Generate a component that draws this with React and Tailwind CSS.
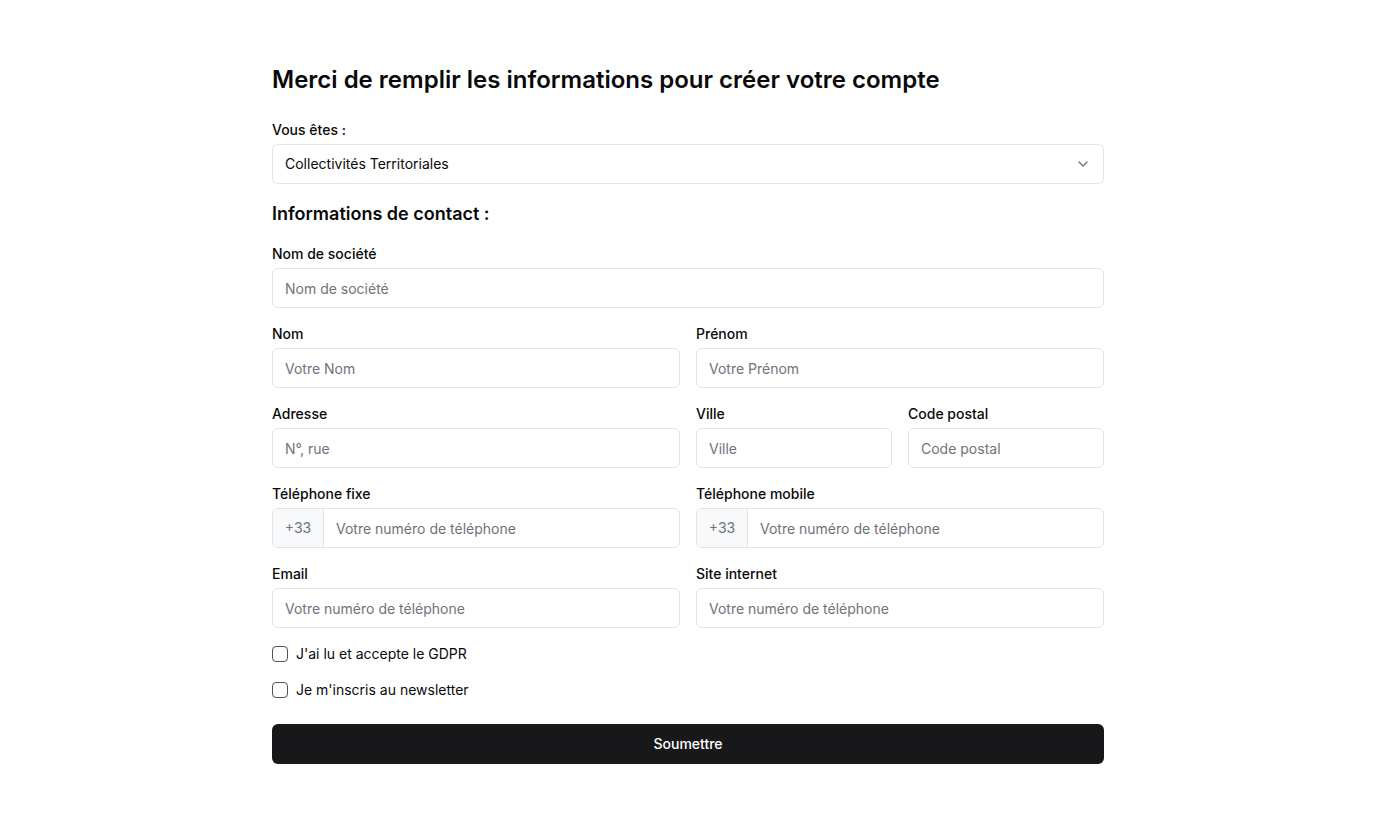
import React from "react";

const font = { fontFamily: "Inter, 'Noto Sans', sans-serif" };

function Label({ children }) {
  return <div className="text-sm font-medium leading-5 text-[#09090b] pt-[1px] pb-[4px]">{children}</div>;
}

function Input({ placeholder }) {
  return (
    <input
      placeholder={placeholder}
      className="h-10 w-full rounded-md border border-[#e4e4e7] bg-white px-3 text-sm text-[#09090b] placeholder:text-[#71717a] outline-none"
      style={font}
    />
  );
}

function Phone() {
  return (
    <div className="flex h-10 w-full overflow-hidden rounded-md border border-[#e4e4e7]">
      <div className="flex w-[51px] items-center justify-center border-r border-[#e4e4e7] bg-[#f8f9fb] text-sm text-[#71717a]">+33</div>
      <input
        placeholder="Votre numéro de téléphone"
        className="h-full flex-1 px-3 text-sm outline-none placeholder:text-[#71717a]"
        style={font}
      />
    </div>
  );
}

function Check({ children }) {
  return (
    <label className="flex items-center gap-2 text-sm text-[#09090b] h-5">
      <span className="h-4 w-4 rounded-[4px] border border-[#52525b] bg-white" />
      {children}
    </label>
  );
}

export default function App() {
  return (
    <div className="min-h-screen bg-white" style={font}>
      <div className="mx-auto w-[832px] pt-[64px] pb-16">
        <h1 className="text-2xl font-semibold leading-8 text-[#09090b]">
          Merci de remplir les informations pour créer votre compte
        </h1>
        <div className="mt-[23px]">
          <Label>Vous êtes :</Label>
          <div className="flex h-10 items-center justify-between rounded-md border border-[#e4e4e7] px-3 text-sm text-[#09090b]">
            <span>Collectivités Territoriales</span>
            <svg width="16" height="16" viewBox="0 0 24 24" fill="none" stroke="#71717a" strokeWidth="2" strokeLinecap="round" strokeLinejoin="round">
              <path d="m6 9 6 6 6-6" />
            </svg>
          </div>
        </div>
        <h2 className="mt-[16px] text-lg font-semibold leading-7 text-[#09090b]">Informations de contact :</h2>
        <div className="mt-[15px] flex flex-col gap-[15px]">
          <div>
            <Label>Nom de société</Label>
            <Input placeholder="Nom de société" />
          </div>
          <div className="grid grid-cols-2 gap-4">
            <div>
              <Label>Nom</Label>
              <Input placeholder="Votre Nom" />
            </div>
            <div>
              <Label>Prénom</Label>
              <Input placeholder="Votre Prénom" />
            </div>
          </div>
          <div className="grid grid-cols-2 gap-4">
            <div>
              <Label>Adresse</Label>
              <Input placeholder="N°, rue" />
            </div>
            <div className="grid grid-cols-2 gap-4">
              <div>
                <Label>Ville</Label>
                <Input placeholder="Ville" />
              </div>
              <div>
                <Label>Code postal</Label>
                <Input placeholder="Code postal" />
              </div>
            </div>
          </div>
          <div className="grid grid-cols-2 gap-4">
            <div>
              <Label>Téléphone fixe</Label>
              <Phone />
            </div>
            <div>
              <Label>Téléphone mobile</Label>
              <Phone />
            </div>
          </div>
          <div className="grid grid-cols-2 gap-4">
            <div>
              <Label>Email</Label>
              <Input placeholder="Votre numéro de téléphone" />
            </div>
            <div>
              <Label>Site internet</Label>
              <Input placeholder="Votre numéro de téléphone" />
            </div>
          </div>
        </div>
        <div className="mt-4 flex flex-col gap-4">
          <Check>J'ai lu et accepte le GDPR</Check>
          <Check>Je m'inscris au newsletter</Check>
        </div>
        <button className="mt-6 flex h-10 w-full items-center justify-center rounded-md bg-[#18181b] text-sm font-medium text-white" style={font}>
          Soumettre
        </button>
      </div>
    </div>
  );
}
